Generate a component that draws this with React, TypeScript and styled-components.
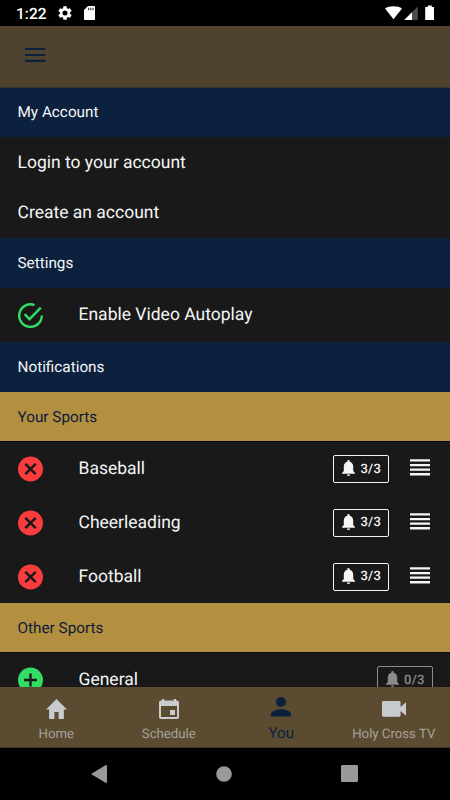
import React from "react";
import styled, { createGlobalStyle } from "styled-components";

const GlobalStyle = createGlobalStyle`
  * { box-sizing: border-box; }
  body { margin: 0; background: #000; font-family: Roboto, sans-serif; text-rendering: geometricPrecision; }
  svg { display: block; flex: none; }
`;

const Screen = styled.div`
  width: 450px;
  height: 800px;
  display: flex;
  flex-direction: column;
  overflow: hidden;
  background: #000;
`;

const StatusBar = styled.div`
  flex: none;
  height: 26px;
  display: flex;
  align-items: center;
  padding: 0 15px 0 16px;
  background: #000;
`;

const Clock = styled.span`
  width: 42px;
  font-size: 15.5px;
  font-weight: 500;
  line-height: 20px;
  color: #fff;
  padding-top: 2px;
`;

const StatusIcons = styled.div<{ $end?: boolean }>`
  display: flex;
  align-items: center;
  gap: ${(p) => (p.$end ? 0 : "11.5px")};
  margin-left: ${(p) => (p.$end ? "auto" : "0")};
`;

const TopBar = styled.header`
  flex: none;
  height: 62px;
  display: flex;
  align-items: center;
  padding: 0 25px 4px;
  background: #4f4330;
  border-bottom: 1px solid #343431;
`;

const Content = styled.main`
  flex: 1;
  min-height: 0;
  overflow: hidden;
  background: #191919;
`;

const SectionTitle = styled.div<{ $gold?: boolean; $height: number }>`
  height: ${(p) => p.$height}px;
  display: flex;
  align-items: center;
  padding: ${(p) => (p.$gold ? "1px 17.5px 0" : "0 17.5px")};
  font-size: 15.3px;
  font-weight: 400;
  color: ${(p) => (p.$gold ? "#101b3b" : "#f5f6f8")};
  background: ${(p) => (p.$gold ? "#b38f40" : "#0c213d")};
  border-bottom: ${(p) => (p.$gold ? "1px solid #080915" : "0")};
`;

const FirstSectionTitle = styled(SectionTitle)`
  padding-bottom: 1.5px;
`;

const LinkRow = styled.div`
  height: 50.25px;
  display: flex;
  align-items: center;
  padding: 1px 17.5px 0;
  font-size: 17.5px;
  color: #f5f5f5;
`;

const Row = styled.div<{ $height: number }>`
  height: ${(p) => p.$height}px;
  display: flex;
  align-items: center;
  padding: 1px 20px 0 18px;
`;

const RowLabel = styled.span`
  flex: 1;
  margin-left: 35.5px;
  font-size: 17.5px;
  color: #f5f5f5;
`;

const Badge = styled.div<{ $dim?: boolean }>`
  width: 56px;
  height: 28px;
  display: flex;
  align-items: center;
  padding-left: 7.5px;
  gap: 5.5px;
  border: ${(p) => (p.$dim ? "1px" : "1.5px")} solid currentColor;
  border-radius: 2px;
  color: ${(p) => (p.$dim ? "#8b8b8b" : "#f5f5f5")};
  margin-right: ${(p) => (p.$dim ? "-3px" : "20.6px")};
  font-size: 13px;
  font-weight: 500;
  letter-spacing: 0.3px;
`;

const TabBar = styled.nav`
  flex: none;
  height: 61px;
  display: grid;
  grid-template-columns: repeat(4, 1fr);
  background: #5b4c31;
  border-bottom: 1px solid #41382a;
`;

const Tab = styled.div<{ $active?: boolean }>`
  display: flex;
  flex-direction: column;
  align-items: center;
  padding-top: ${(p) => (p.$active ? 9 : 11)}px;
  gap: 5px;
  font-size: ${(p) => (p.$active ? 15.2 : 13.2)}px;
  line-height: 20px;
  letter-spacing: 0;
  white-space: nowrap;
  color: ${(p) => (p.$active ? "#0c213d" : "#a5a19a")};
`;

const TabIcon = styled.div`
  height: 22px;
  display: flex;
  align-items: center;
`;

const SystemNav = styled.div`
  flex: none;
  height: 52px;
  display: flex;
  align-items: center;
  justify-content: space-between;
  padding: 0 92px 1px 91px;
  background: #000;
`;

const Gear = () => (
  <svg width="14" height="14" viewBox="2 2 20 20" fill="#fff">
    <path d="M19.14 12.94c.04-.3.06-.61.06-.94s-.02-.64-.07-.94l2.03-1.58a.49.49 0 0 0 .12-.61l-1.92-3.32a.49.49 0 0 0-.59-.22l-2.39.96a7 7 0 0 0-1.62-.94L14.4 2.81a.48.48 0 0 0-.48-.41h-3.84a.47.47 0 0 0-.47.41l-.36 2.54c-.59.24-1.13.57-1.62.94l-2.39-.96a.48.48 0 0 0-.59.22L2.74 8.87a.48.48 0 0 0 .12.61l2.03 1.58a6 6 0 0 0 0 1.88l-2.03 1.58a.49.49 0 0 0-.12.61l1.92 3.32c.12.22.37.29.59.22l2.39-.96c.5.38 1.03.7 1.62.94l.36 2.54c.05.24.24.41.48.41h3.84c.24 0 .44-.17.47-.41l.36-2.54c.59-.24 1.13-.56 1.62-.94l2.39.96c.22.08.47 0 .59-.22l1.92-3.32a.48.48 0 0 0-.12-.61zM12 15.6a3.6 3.6 0 1 1 0-7.2 3.6 3.6 0 0 1 0 7.2z" />
  </svg>
);

const SdCard = () => (
  <svg width="11" height="14" viewBox="0 0 11 14" fill="#fff">
    <path d="M4 0h6.200q.8 0 .8.800v12.400q0 .8-.8.800H.8q-.8 0-.8-.800V4z" />
    <path d="M4 1.700h1.200v2.600H4zM6.200 1.700h1.200v2.600H6.200zM8.400 1.700h1.200v2.600H8.400z" fill="#444" />
  </svg>
);

const Signals = () => (
  <svg width="50" height="16" viewBox="0 0 50 16" fill="#fff">
    <path d="M0 3.5C4 .5 13 .5 17 3.5L8.5 14.3z" />
    <path d="M19.2 15 32.8 1.5V15z" fill="#4b4b4b" />
    <path d="M19.2 15 27 7.2V15z" />
    <path d="M42.8.5h4V2H49v13h-8.8V2h2.6z" />
  </svg>
);

const Menu = () => (
  <svg width="21" height="15" viewBox="0 0 21 15" fill="#0c213d">
    <path d="M0 .9h20.400v2.200H0zM0 6.900h20.400v2.200H0zM0 12.800h20.400v2.200H0z" />
  </svg>
);

const CheckRing = () => (
  <svg width="25" height="25" viewBox="0 0 25 25" fill="none" stroke="#33dc64" strokeWidth="2.4">
    <path d="M16.5 2A11.3 11.3 0 1 0 23.8 12.5M6.7 11.2l4.8 5L22.8 4.7" />
  </svg>
);

const RemoveIcon = () => (
  <svg width="25" height="26" viewBox="0 0 25 26">
    <circle cx="12.5" cy="13" r="12.5" fill="#fb3c3e" />
    <path d="m7.3 7.8 10.4 10.4m0-10.4L7.3 18.2" stroke="#191919" strokeWidth="2.5" />
  </svg>
);

const AddIcon = () => (
  <svg width="25" height="26" viewBox="0 0 25 26">
    <circle cx="12.5" cy="13" r="12.5" fill="#33dc64" />
    <path d="M6 13h13M12.5 6.5v13" stroke="#191919" strokeWidth="2.4" />
  </svg>
);

const BellIcon = styled.svg`
  margin-bottom: 2px;
`;

const Bell = () => (
  <BellIcon width="13" height="16" viewBox="0 0 13 16" fill="currentColor">
    <path d="M5.3 1.7V1.2a1.2 1.2 0 0 1 2.4 0v.5c2.1.5 3.5 2.3 3.5 4.8v4.600L13 12.900v.8H0v-.8l1.800-1.800V6.500c0-2.500 1.400-4.300 3.500-4.800zM4.900 14.400h3.200a1.600 1.600 0 0 1-3.200 0z" />
  </BellIcon>
);

const GripIcon = styled.svg`
  margin-bottom: 3px;
`;

const Grip = () => (
  <GripIcon width="20" height="17" viewBox="0 0 20 17" fill="#f5f5f5">
    <path d="M0 .3h20v2.300H0zM0 4.900h20v2.300H0zM0 9.500h20v2.300H0zM0 14.100h20v2.300H0z" />
  </GripIcon>
);

const Home = () => (
  <svg width="21" height="20" viewBox="2 3 20 17" preserveAspectRatio="none" fill="#c8cccf">
    <path d="M10 20v-6h4v6h5v-8h3L12 3 2 12h3v8z" />
  </svg>
);

const Schedule = () => (
  <svg width="20" height="20" viewBox="0 0 20 20" fill="#c8cccf">
    <path
      fillRule="evenodd"
      d="M3 0h2.300v1.500h9.400V0H17v1.500h1a2 2 0 0 1 2 2v14.500a2 2 0 0 1-2 2H2a2 2 0 0 1-2-2V3.500a2 2 0 0 1 2-2h1zM2 7v11h16V7zM11 11h5v5h-5z"
    />
  </svg>
);

const Person = () => (
  <svg width="20" height="20" viewBox="0 0 20 20" fill="#0c213d">
    <circle cx="10" cy="5" r="5" />
    <path d="M0 19.500v-2.300C0 14 6 12.300 10 12.300s10 1.700 10 4.900v2.300z" />
  </svg>
);

const Video = () => (
  <svg width="24" height="16" viewBox="0 0 24 16" fill="#c8cccf">
    <path d="M1.400 0h15.800c.8 0 1.400.6 1.400 1.400V6L24 1.200v13.600L18.600 10v4.300c0 .8-.6 1.400-1.400 1.400H1.400C.6 15.700 0 15.100 0 14.300V1.400C0 .6.6 0 1.400 0z" />
  </svg>
);

const tabs = [
  { label: "Home", icon: <Home /> },
  { label: "Schedule", icon: <Schedule /> },
  { label: "You", icon: <Person />, active: true },
  { label: "Holy Cross TV", icon: <Video /> },
];

export default function App() {
  return (
    <Screen>
      <GlobalStyle />
      <StatusBar>
        <Clock>1:22</Clock>
        <StatusIcons>
          <Gear />
          <SdCard />
        </StatusIcons>
        <StatusIcons $end>
          <Signals />
        </StatusIcons>
      </StatusBar>
      <TopBar>
        <Menu />
      </TopBar>
      <Content>
        <FirstSectionTitle $height={49}>My Account</FirstSectionTitle>
        <LinkRow>Login to your account</LinkRow>
        <LinkRow>Create an account</LinkRow>
        <SectionTitle $height={50}>Settings</SectionTitle>
        <Row $height={54}>
          <CheckRing />
          <RowLabel>Enable Video Autoplay</RowLabel>
        </Row>
        <SectionTitle $height={50}>Notifications</SectionTitle>
        <SectionTitle $gold $height={50.3}>Your Sports</SectionTitle>
        {["Baseball", "Cheerleading", "Football"].map((sport) => (
          <Row key={sport} $height={53.7}>
            <RemoveIcon />
            <RowLabel>{sport}</RowLabel>
            <Badge>
              <Bell />
              3/3
            </Badge>
            <Grip />
          </Row>
        ))}
        <SectionTitle $gold $height={50}>Other Sports</SectionTitle>
        <Row $height={53.7}>
          <AddIcon />
          <RowLabel>General</RowLabel>
          <Badge $dim>
            <Bell />
            0/3
          </Badge>
        </Row>
      </Content>
      <TabBar>
        {tabs.map((tab) => (
          <Tab key={tab.label} $active={tab.active}>
            <TabIcon>{tab.icon}</TabIcon>
            {tab.label}
          </Tab>
        ))}
      </TabBar>
      <SystemNav>
        <svg width="16" height="18" viewBox="0 0 16 18" fill="#999">
          <path d="M0 9 14.500.3Q16-.3 16 1v16q0 1.300-1.500.700z" />
        </svg>
        <svg width="16" height="16" viewBox="0 0 16 16" fill="#999">
          <circle cx="8" cy="8" r="7.800" />
        </svg>
        <svg width="17" height="17" viewBox="0 0 17 17" fill="#999">
          <rect width="17" height="17" rx="1.200" />
        </svg>
      </SystemNav>
    </Screen>
  );
}
